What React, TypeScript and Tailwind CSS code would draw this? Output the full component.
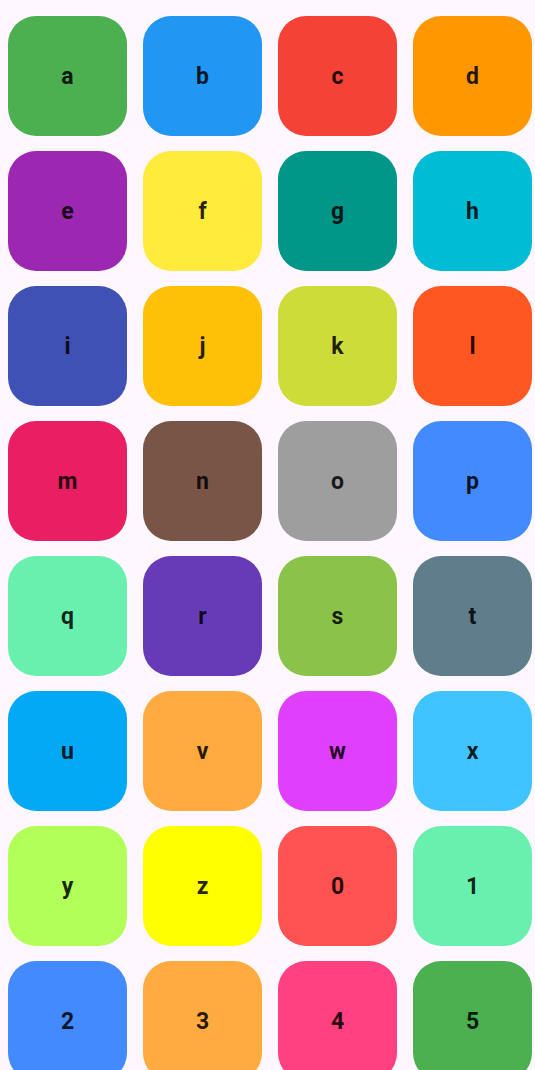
const tiles: { label: string; color: string }[] = [
  { label: "a", color: "bg-[#4caf50]" },
  { label: "b", color: "bg-[#2196f3]" },
  { label: "c", color: "bg-[#f44336]" },
  { label: "d", color: "bg-[#ff9800]" },
  { label: "e", color: "bg-[#9c27b0]" },
  { label: "f", color: "bg-[#ffeb3b]" },
  { label: "g", color: "bg-[#009688]" },
  { label: "h", color: "bg-[#00bcd4]" },
  { label: "i", color: "bg-[#3f51b5]" },
  { label: "j", color: "bg-[#ffc107]" },
  { label: "k", color: "bg-[#cddc39]" },
  { label: "l", color: "bg-[#ff5722]" },
  { label: "m", color: "bg-[#e91e63]" },
  { label: "n", color: "bg-[#795548]" },
  { label: "o", color: "bg-[#9e9e9e]" },
  { label: "p", color: "bg-[#448aff]" },
  { label: "q", color: "bg-[#69f0ae]" },
  { label: "r", color: "bg-[#673ab7]" },
  { label: "s", color: "bg-[#8bc34a]" },
  { label: "t", color: "bg-[#607d8b]" },
  { label: "u", color: "bg-[#03a9f4]" },
  { label: "v", color: "bg-[#ffab40]" },
  { label: "w", color: "bg-[#e040fb]" },
  { label: "x", color: "bg-[#40c4ff]" },
  { label: "y", color: "bg-[#b2ff59]" },
  { label: "z", color: "bg-[#ffff00]" },
  { label: "0", color: "bg-[#ff5252]" },
  { label: "1", color: "bg-[#69f0ae]" },
  { label: "2", color: "bg-[#448aff]" },
  { label: "3", color: "bg-[#ffab40]" },
  { label: "4", color: "bg-[#ff4081]" },
  { label: "5", color: "bg-[#4caf50]" },
]

const App: React.FC = () => {
  return (
    <div className="h-[1070px] overflow-hidden bg-[#fef7ff] pt-4 pl-2 font-['Roboto',sans-serif]">
      <div className="grid grid-cols-[repeat(4,119px)] gap-x-4 gap-y-[15px]">
        {tiles.map((tile) => (
          <div
            key={tile.label}
            className={`flex h-[120px] items-center justify-center rounded-[28px] ${tile.color}`}
          >
            <span className="pt-[2px] text-[23px] font-bold text-black/85">
              {tile.label}
            </span>
          </div>
        ))}
      </div>
    </div>
  )
}

export default App
